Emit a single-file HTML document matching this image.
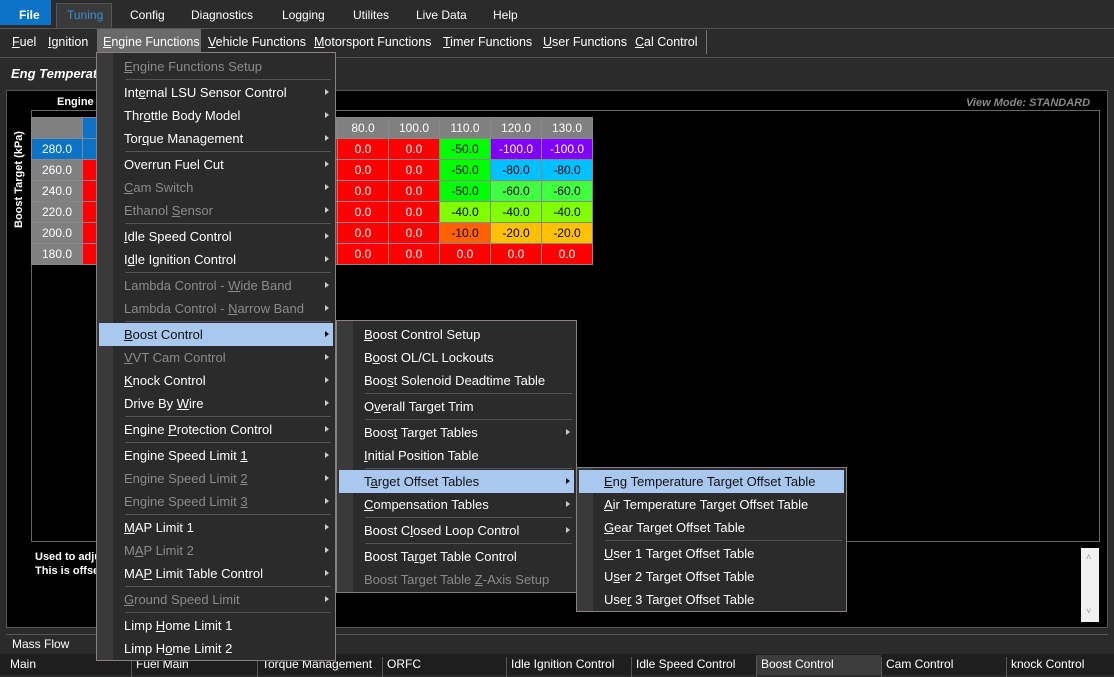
<!DOCTYPE html><html><head><style>
*{margin:0;padding:0;box-sizing:border-box}
body{width:1114px;height:675px;background:#2b2b2b;font-family:"Liberation Sans",sans-serif;font-size:13px;color:#fff;position:relative;overflow:hidden}
.a{position:absolute}
.top span{position:absolute;top:8px;font-size:12px}
.m2 span{position:absolute;top:35px;font-size:12.5px}
u{text-decoration:underline}
.menu{position:absolute;background:#2b2b2b;border:1px solid #8c7f80}
.strip{position:absolute;left:0;top:0;bottom:0;width:16px;background:#3a3a3a}
.it{position:absolute;left:2px;right:2px;height:23px;line-height:23px;padding-left:25px;font-size:13px;color:#fff}
.it.d{color:#8a8a8a}
.it.h{background:#a9c8ef;color:#111}
.it.s::after{content:"";position:absolute;right:4px;top:8px;border-left:4px solid #ccc;border-top:3.5px solid transparent;border-bottom:3.5px solid transparent}
.it.h.s::after{border-left-color:#111}
.sp{position:absolute;left:28px;right:4px;height:1px;background:#555}
table{border-collapse:collapse;position:absolute;font-size:12px}
td{width:51px;height:21px;border:1px solid #888;text-align:center;color:#fff}
.hd td{background:#808080}
.r{background:#f00}.g{background:#0f0;color:#000}.p{background:#8000ff}.c{background:#00c0ff;color:#000}.lg{background:#40ff40;color:#000}.yg{background:#80ff00;color:#000}.o{background:#ff6000;color:#000}.y{background:#ffc000;color:#000}
.rl{background:#808080}
.bt span{position:absolute;top:3px;font-size:12px;height:20px;border-left:1px solid #555;padding-left:4px;width:125px}
</style></head><body>
<div class="a" style="left:0;top:0;width:1114px;height:28px;background:#2b2b2b"></div>
<div class="a" style="left:0;top:0;width:51px;height:25px;background:#0a73c8"></div>
<div class="a" style="left:56px;top:3px;width:56px;height:25px;background:#3a3a3a;border:1px solid #555;border-bottom:none"></div>
<div class="top"><span style="left:19px;font-weight:bold">File</span><span style="left:67px;color:#3a8fd8">Tuning</span><span style="left:130px">Config</span><span style="left:191px">Diagnostics</span><span style="left:282px">Logging</span><span style="left:353px">Utilites</span><span style="left:416px">Live Data</span><span style="left:493px">Help</span></div>
<div class="a" style="left:0;top:28px;width:1114px;height:1px;background:#555"></div>
<div class="a" style="left:97px;top:29px;width:104px;height:24px;background:#6a6a6a"></div>
<div class="a" style="left:706px;top:30px;width:1px;height:24px;background:#777"></div>
<div class="m2"><span style="left:12px"><u>F</u>uel</span><span style="left:48px"><u>I</u>gnition</span><span style="left:103px"><u>E</u>ngine Functions</span><span style="left:208px"><u>V</u>ehicle Functions</span><span style="left:314px"><u>M</u>otorsport Functions</span><span style="left:443px"><u>T</u>imer Functions</span><span style="left:543px"><u>U</u>ser Functions</span><span style="left:635px"><u>C</u>al Control</span></div>
<div class="a" style="left:0;top:57px;width:1114px;height:1px;background:#555"></div>
<div class="a" style="left:11px;top:66px;font-weight:bold;font-style:italic;font-size:13px">Eng Temperature Target Offset Table</div>
<div class="a" style="left:6px;top:90px;width:1102px;height:538px;background:#000;border:1px solid #555"></div>
<div class="a" style="left:31px;top:110px;width:1069px;height:432px;border:1px solid #666"></div>
<div class="a" style="left:57px;top:96px;font-size:11px;font-weight:bold">Engine Temperature</div>
<div class="a" style="left:966px;top:97px;font-size:11px;font-weight:bold;font-style:italic;color:#888">View Mode: STANDARD</div>
<div class="a" style="left:13px;top:228px;transform:rotate(-90deg);transform-origin:left top;font-size:11px;font-weight:bold">Boost Target (kPa)</div>
<table style="left:31px;top:117px">
<tr class="hd"><td></td><td style="background:#0a73c8">-</td><td></td><td></td><td></td><td></td><td>80.0</td><td>100.0</td><td>110.0</td><td>120.0</td><td>130.0</td></tr>
<tr><td style="background:#0a73c8">280.0</td><td style="background:#0a73c8"></td><td class="r"></td><td class="r"></td><td class="r"></td><td class="r"></td><td class="r">0.0</td><td class="r">0.0</td><td class="g">-50.0</td><td class="p">-100.0</td><td class="p">-100.0</td></tr>
<tr><td class="rl">260.0</td><td class="r"></td><td class="r"></td><td class="r"></td><td class="r"></td><td class="r"></td><td class="r">0.0</td><td class="r">0.0</td><td class="g">-50.0</td><td class="c">-80.0</td><td class="c">-80.0</td></tr>
<tr><td class="rl">240.0</td><td class="r"></td><td class="r"></td><td class="r"></td><td class="r"></td><td class="r"></td><td class="r">0.0</td><td class="r">0.0</td><td class="g">-50.0</td><td class="lg">-60.0</td><td class="lg">-60.0</td></tr>
<tr><td class="rl">220.0</td><td class="r"></td><td class="r"></td><td class="r"></td><td class="r"></td><td class="r"></td><td class="r">0.0</td><td class="r">0.0</td><td class="yg">-40.0</td><td class="yg">-40.0</td><td class="yg">-40.0</td></tr>
<tr><td class="rl">200.0</td><td class="r"></td><td class="r"></td><td class="r"></td><td class="r"></td><td class="r"></td><td class="r">0.0</td><td class="r">0.0</td><td class="o">-10.0</td><td class="y">-20.0</td><td class="y">-20.0</td></tr>
<tr><td class="rl">180.0</td><td class="r"></td><td class="r"></td><td class="r"></td><td class="r"></td><td class="r"></td><td class="r">0.0</td><td class="r">0.0</td><td class="r">0.0</td><td class="r">0.0</td><td class="r">0.0</td></tr>
</table>
<div class="a" style="left:35px;top:550px;font-size:11px;font-weight:bold;line-height:14px">Used to adjust the boost target based on engine temperature.<br>This is offset from the base target.</div>
<div class="a" style="left:1081px;top:548px;width:18px;height:74px;background:#f0f0f0"></div>
<div class="a" style="left:1086px;top:552px;font-size:9px;color:#999">˄</div>
<div class="a" style="left:1086px;top:606px;font-size:9px;color:#999">˅</div>
<div class="a" style="left:6px;top:634px;width:1102px;height:20px;background:#2b2b2b;border-top:1px solid #555"></div>
<div class="a" style="left:12px;top:637px;font-size:12px">Mass Flow</div>
<div class="a" style="left:0;top:654px;width:1114px;height:21px;background:#1e1e1e"></div>
<div class="a" style="left:756px;top:655px;width:125px;height:20px;background:#3c3c3c"></div>
<div class="bt"><span style="left:6px;top:657px;border:none">Main</span><span style="left:131px;top:657px">Fuel Main</span><span style="left:257px;top:657px">Torque Management</span><span style="left:382px;top:657px">ORFC</span><span style="left:506px;top:657px">Idle Ignition Control</span><span style="left:631px;top:657px">Idle Speed Control</span><span style="left:756px;top:657px">Boost Control</span><span style="left:881px;top:657px">Cam Control</span><span style="left:1006px;top:657px">knock Control</span></div>

<div class="menu" style="left:96px;top:52px;width:240px;height:609px"><div class="strip"></div>
<div class="it d" style="top:2px"><u>E</u>ngine Functions Setup</div><div class="sp" style="top:26px"></div>
<div class="it s" style="top:28px">Int<u>e</u>rnal LSU Sensor Control</div>
<div class="it s" style="top:51px">Thr<u>o</u>ttle Body Model</div>
<div class="it s" style="top:74px">Tor<u>q</u>ue Management</div><div class="sp" style="top:98px"></div>
<div class="it s" style="top:100px">Overrun Fuel Cut</div>
<div class="it d s" style="top:123px"><u>C</u>am Switch</div>
<div class="it d s" style="top:146px">Ethanol <u>S</u>ensor</div><div class="sp" style="top:170px"></div>
<div class="it s" style="top:172px"><u>I</u>dle Speed Control</div>
<div class="it s" style="top:195px">I<u>d</u>le Ignition Control</div><div class="sp" style="top:219px"></div>
<div class="it d s" style="top:221px">Lambda Control - <u>W</u>ide Band</div>
<div class="it d s" style="top:244px">Lambda Control - <u>N</u>arrow Band</div><div class="sp" style="top:268px"></div>
<div class="it h s" style="top:270px"><u>B</u>oost Control</div>
<div class="it d s" style="top:293px"><u>V</u>VT Cam Control</div>
<div class="it s" style="top:316px"><u>K</u>nock Control</div>
<div class="it s" style="top:339px">Drive By <u>W</u>ire</div><div class="sp" style="top:363px"></div>
<div class="it s" style="top:365px">Engine <u>P</u>rotection Control</div><div class="sp" style="top:389px"></div>
<div class="it s" style="top:391px">Engine Speed Limit <u>1</u></div>
<div class="it d s" style="top:414px">Engine Speed Limit <u>2</u></div>
<div class="it d s" style="top:437px">Engine Speed Limit <u>3</u></div><div class="sp" style="top:461px"></div>
<div class="it s" style="top:463px"><u>M</u>AP Limit 1</div>
<div class="it d s" style="top:486px">M<u>A</u>P Limit 2</div>
<div class="it s" style="top:509px">MA<u>P</u> Limit Table Control</div><div class="sp" style="top:533px"></div>
<div class="it d s" style="top:535px"><u>G</u>round Speed Limit</div><div class="sp" style="top:559px"></div>
<div class="it" style="top:561px">Limp <u>H</u>ome Limit 1</div>
<div class="it" style="top:584px">Limp H<u>o</u>me Limit 2</div>
</div>

<div class="menu" style="left:336px;top:320px;width:241px;height:273px"><div class="strip"></div>
<div class="it" style="top:2px"><u>B</u>oost Control Setup</div>
<div class="it" style="top:25px">B<u>o</u>ost OL/CL Lockouts</div>
<div class="it" style="top:48px">Boo<u>s</u>t Solenoid Deadtime Table</div><div class="sp" style="top:72px"></div>
<div class="it" style="top:74px">O<u>v</u>erall Target Trim</div><div class="sp" style="top:98px"></div>
<div class="it s" style="top:100px">Boos<u>t</u> Target Tables</div>
<div class="it" style="top:123px"><u>I</u>nitial Position Table</div><div class="sp" style="top:147px"></div>
<div class="it h s" style="top:149px">T<u>a</u>rget Offset Tables</div>
<div class="it s" style="top:172px"><u>C</u>ompensation Tables</div><div class="sp" style="top:196px"></div>
<div class="it s" style="top:198px">Boost C<u>l</u>osed Loop Control</div><div class="sp" style="top:222px"></div>
<div class="it" style="top:224px">Boost Ta<u>r</u>get Table Control</div>
<div class="it d" style="top:247px">Boost Target Table <u>Z</u>-Axis Setup</div>
</div>

<div class="menu" style="left:576px;top:467px;width:271px;height:145px"><div class="strip"></div>
<div class="it h" style="top:2px"><u>E</u>ng Temperature Target Offset Table</div>
<div class="it" style="top:25px"><u>A</u>ir Temperature Target Offset Table</div>
<div class="it" style="top:48px"><u>G</u>ear Target Offset Table</div><div class="sp" style="top:72px"></div>
<div class="it" style="top:74px"><u>U</u>ser 1 Target Offset Table</div>
<div class="it" style="top:97px">U<u>s</u>er 2 Target Offset Table</div>
<div class="it" style="top:120px">Use<u>r</u> 3 Target Offset Table</div>
</div>
</body></html>
